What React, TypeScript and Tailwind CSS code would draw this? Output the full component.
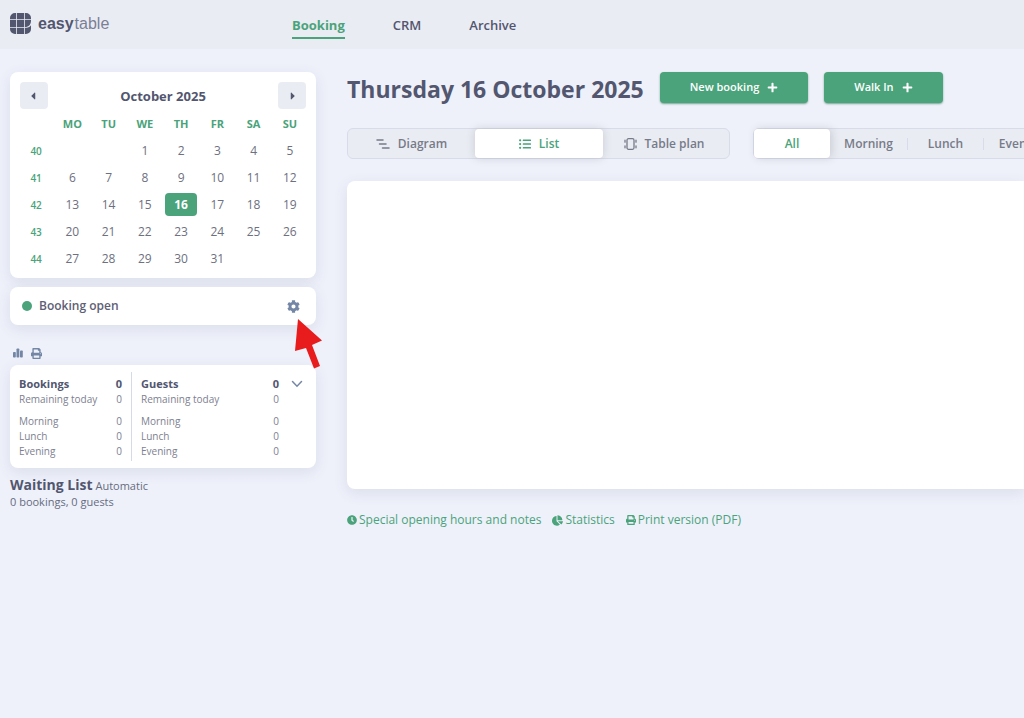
import type { ReactNode } from 'react';
import {
  FaCaretLeft,
  FaCaretRight,
  FaChartPie,
  FaClock,
  FaCog,
  FaListUl,
  FaPlus,
  FaPrint,
} from 'react-icons/fa';

const navItems = ['Booking', 'CRM', 'Archive'];
const weekdays = ['MO', 'TU', 'WE', 'TH', 'FR', 'SA', 'SU'];

const weeks: { no: number; days: (number | null)[] }[] = [
  { no: 40, days: [null, null, 1, 2, 3, 4, 5] },
  { no: 41, days: [6, 7, 8, 9, 10, 11, 12] },
  { no: 42, days: [13, 14, 15, 16, 17, 18, 19] },
  { no: 43, days: [20, 21, 22, 23, 24, 25, 26] },
  { no: 44, days: [27, 28, 29, 30, 31, null, null] },
];

const periods = ['Morning', 'Lunch', 'Evening'];
const card = 'bg-white rounded-lg shadow-[0_4px_14px_rgba(84,90,120,0.12)]';

function Logo() {
  return (
    <a href="#" className="flex items-center gap-[7px] text-[#52566f]">
      <svg width="21" height="21" viewBox="0 0 21 21" fill="currentColor" aria-hidden="true">
        <path d="M5 0h1.200v6.200H0V5a5 5 0 0 1 5-5zM7 0h7v6.200H7zM14.800 0H16a5 5 0 0 1 5 5v1.200h-6.200zM0 7h6.200v7H0zM7 7h7v7H7zM14.800 7H21v1c0 3-1.800 5.400-4.700 6h-1.500zM0 14.800h6.200V21H5a5 5 0 0 1-5-5zM7 14.800h7V21H7zM14.800 14.800h1.500c2.300-.2 3.800-1.200 4.700-2.600V16a5 5 0 0 1-5 5h-1.200z" />
      </svg>
      <span className="font-['Liberation_Sans',sans-serif] text-base leading-5">
        <b>easy</b>
        <span className="ml-px text-[#7b7f95]">table</span>
      </span>
    </a>
  );
}

function DiagramIcon() {
  return (
    <svg width="14" height="10" viewBox="0 0 14 10" fill="none" stroke="currentColor" strokeWidth="1.500" strokeLinecap="round">
      <path d="M1 1h6M3.500 5H10M6.500 9H13" />
    </svg>
  );
}

function TablePlanIcon() {
  return (
    <svg width="13" height="12" viewBox="0 0 13 12" fill="none" stroke="currentColor" strokeWidth="1.300" strokeLinecap="round">
      <rect x="3" y="0.700" width="7" height="10.600" rx="1.500" />
      <path d="M1 2.200v2M1 7.800v2M12 2.200v2M12 7.800v2" />
    </svg>
  );
}

function BarsIcon() {
  return (
    <svg width="10" height="10" viewBox="0 0 10 10" fill="currentColor">
      <rect x="0" y="4" width="2.800" height="5.500" rx="0.800" />
      <rect x="3.500" y="0.500" width="2.800" height="9" rx="0.800" />
      <rect x="7" y="2.500" width="2.800" height="7" rx="0.800" />
    </svg>
  );
}

function Calendar() {
  return (
    <section className={`${card} px-2 pt-2 pb-1.5`}>
      <div className="flex items-center justify-between px-0.5 pt-0.5 text-[#52566f]">
        <button aria-label="Previous month" className="flex h-[27px] w-7 items-center justify-center rounded bg-[#eaecf4] pr-0.5">
          <FaCaretLeft size={12} />
        </button>
        <h2 className="text-[13px] leading-5 font-bold">October 2025</h2>
        <button aria-label="Next month" className="flex h-[27px] w-7 items-center justify-center rounded bg-[#eaecf4] pl-0.5">
          <FaCaretRight size={12} />
        </button>
      </div>
      <table className="mt-0.5 w-full table-fixed text-center text-xs text-[#6d7080]">
        <thead>
          <tr className="h-[26px] text-[#4aa37a]">
            <th aria-label="Week" />
            {weekdays.map((d) => (
              <th key={d} className="p-0 text-[11px] font-bold">{d}</th>
            ))}
          </tr>
        </thead>
        <tbody>
          {weeks.map((week) => (
            <tr key={week.no} className="h-[27px]">
              <th className="p-0 text-[10px] leading-4 font-semibold text-[#4aa37a]">{week.no}</th>
              {week.days.map((day, i) => (
                <td key={i} className="p-0">
                  {day === 16 ? (
                    <button className="h-[23px] w-8 rounded bg-[#4aa37a] font-bold text-white">16</button>
                  ) : (
                    day && <button>{day}</button>
                  )}
                </td>
              ))}
            </tr>
          ))}
        </tbody>
      </table>
    </section>
  );
}

function Totals({ title }: { title: string }) {
  return (
    <dl className="text-[10px] leading-[15px] text-[#7d8090]">
      <div className="flex justify-between text-[11px] leading-4 font-bold text-[#52566f]">
        <dt>{title}</dt>
        <dd>0</dd>
      </div>
      <div className="mb-[7px] flex justify-between">
        <dt>Remaining today</dt>
        <dd>0</dd>
      </div>
      {periods.map((p) => (
        <div key={p} className="flex justify-between">
          <dt>{p}</dt>
          <dd>0</dd>
        </div>
      ))}
    </dl>
  );
}

function ActionButton({ children }: { children: ReactNode }) {
  return (
    <button className="flex h-[31px] items-center gap-2 rounded bg-[#4aa37a] px-[30px] text-[11px] font-semibold whitespace-nowrap text-white shadow-[0_1px_2px_rgba(40,110,75,0.6)]">
      {children} <FaPlus size={11} />
    </button>
  );
}

function FooterLink({ icon, children }: { icon: ReactNode; children: ReactNode }) {
  return (
    <a href="#" className="flex items-center gap-0.5 whitespace-nowrap">
      {icon}
      {children}
    </a>
  );
}

export default function App() {
  return (
    <div className="min-h-screen overflow-x-hidden bg-[#eef1fa] font-['Open_Sans',sans-serif] text-[#52566f]">
      <header className="flex h-[49px] items-center bg-[#eaecf4] px-2.5">
        <div className="w-[282px] shrink-0 pb-0.5">
          <Logo />
        </div>
        <nav className="flex gap-12 text-[13px] leading-5 font-semibold">
          {navItems.map((item, i) => (
            <a
              key={item}
              href="#"
              className={
                i === 0
                  ? 'border-b-2 border-[#4aa37a] pt-1 pb-0.5 font-bold text-[#4aa37a]'
                  : 'border-b-2 border-transparent pt-1 pb-0.5'
              }
            >
              {item}
            </a>
          ))}
        </nav>
      </header>

      <div className="flex gap-[31px] pt-[23px] pl-2.5">
        <aside className="w-[306px] shrink-0">
          <Calendar />

          <section className={`${card} mt-[9px] flex h-[38px] items-center pr-4 pl-3`}>
            <span className="h-2.5 w-2.5 rounded-full bg-[#4aa37a]" />
            <span className="ml-[7px] flex-1 text-xs font-semibold text-[#5d6075]">Booking open</span>
            <button aria-label="Booking settings" className="text-[#7486a5]">
              <FaCog size={13} />
            </button>
          </section>

          <div className="relative mt-[22px] flex h-3 items-center gap-2 pl-[3px] text-[#7486a5]">
            <button aria-label="Show chart"><BarsIcon /></button>
            <button aria-label="Print"><FaPrint size={11} /></button>
            <svg className="absolute -top-7 right-[-6px]" width="28" height="50" viewBox="0 0 28 50" fill="#e81c1c" aria-hidden="true">
              <path d="M4 0 28 21.500 18 26 26 47 20 49.500 12 29 1 32z" />
            </svg>
          </div>

          <section className={`${card} mt-1.5 flex px-[9px] py-[7px]`}>
            <div className="w-[113px] border-r border-[#d5dae8] pt-1 pr-[9px] pb-0.5">
              <Totals title="Bookings" />
            </div>
            <div className="flex-1 pt-1 pl-[9px]">
              <Totals title="Guests" />
            </div>
            <button aria-label="Collapse totals" className="mt-2 mr-1 ml-3 self-start text-[#7486a5]">
              <svg width="12" height="8" viewBox="0 0 12 8" fill="none" stroke="currentColor" strokeWidth="1.500" strokeLinecap="round">
                <path d="M1.500 1.500 6 6.200l4.500-4.700" />
              </svg>
            </button>
          </section>

          <div className="mt-2 text-[11px] leading-4 text-[#676b80]">
            <h3 className="inline text-sm leading-[18px] font-bold text-[#52566f]">Waiting List</h3> Automatic
            <p>0 bookings, 0 guests</p>
          </div>
        </aside>

        <main className="min-w-0 flex-1">
          <div className="flex items-start gap-4">
            <h1 className="text-[23px] leading-[34px] font-bold whitespace-nowrap">Thursday 16 October 2025</h1>
            <ActionButton>New booking</ActionButton>
            <ActionButton>Walk In</ActionButton>
          </div>

          <div className="mt-[22px] flex gap-[23px] overflow-x-clip text-xs font-semibold text-[#777b88]">
            <div className="flex h-[31px] shrink-0 rounded-md border border-[#d8dce9] bg-[#eaecf4]">
              <button className="flex w-[127px] items-center justify-center gap-2">
                <DiagramIcon /> Diagram
              </button>
              <button className="flex w-32 items-center justify-center gap-2 rounded bg-white text-[#4aa37a] shadow-[0_0_8px_rgba(80,80,90,0.22)]">
                <FaListUl size={12} /> List
              </button>
              <button className="flex w-[126px] items-center justify-center gap-2 pr-1">
                <TablePlanIcon /> Table plan
              </button>
            </div>
            <div className="flex h-[31px] shrink-0 items-center rounded-md border border-[#d8dce9] bg-[#eaecf4]">
              <button className="h-full w-[76px] rounded bg-white text-[#4aa37a] shadow-[2px_0_8px_rgba(80,80,90,0.2)]">All</button>
              <button className="w-[77px]">Morning</button>
              <button className="h-3 w-[76px] border-l border-[#d8dce9] leading-3">Lunch</button>
              <button className="h-3 w-[76px] border-l border-[#d8dce9] leading-3">Evening</button>
            </div>
          </div>

          <section aria-label="Bookings" className="mt-[22px] h-[308px] rounded-l-lg bg-white shadow-[0_4px_14px_rgba(84,90,120,0.12)]" />

          <div className="mt-[23px] flex gap-[11px] text-xs text-[#4aa37a]">
            <FooterLink icon={<FaClock size={10} />}>Special opening hours and notes</FooterLink>
            <FooterLink icon={<FaChartPie size={11} />}>Statistics</FooterLink>
            <FooterLink icon={<FaPrint size={10} />}>Print version (PDF)</FooterLink>
          </div>
        </main>
      </div>
    </div>
  );
}
